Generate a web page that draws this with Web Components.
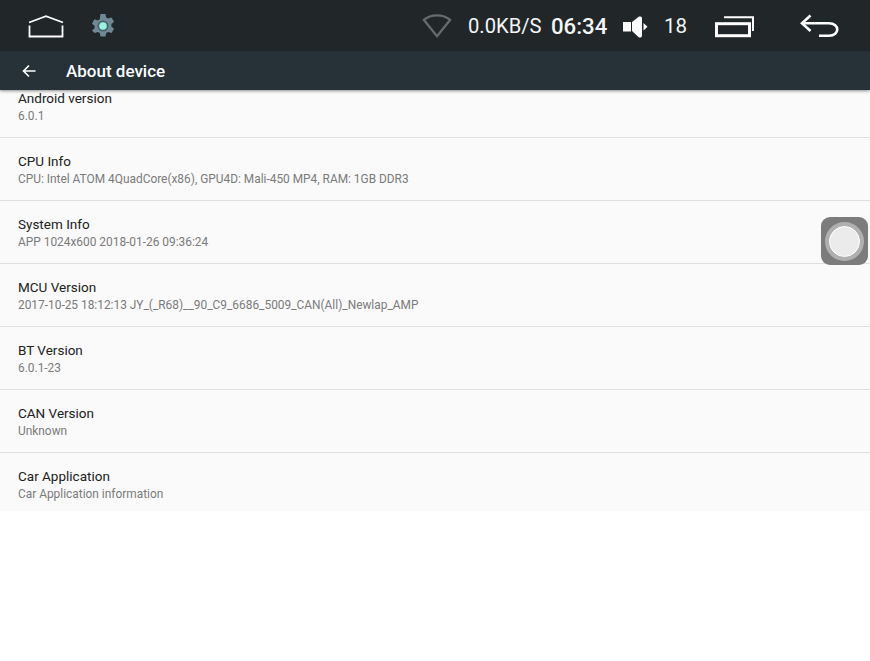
<!DOCTYPE html>
<html>
<head>
<meta charset="utf-8">
<title>About device</title>
<style>
html, body { margin: 0; padding: 0; background: #fff; }
body { width: 870px; height: 661px; overflow: hidden; position: relative; font-family: Roboto, "Liberation Sans", sans-serif; }
</style>
</head>
<body>
<template id="status-bar-tpl">
  <style>
    :host { display: flex; align-items: center; height: 51px; background: #212729; color: #f4f6f6; position: relative; z-index: 3; }
    svg { display: block; flex: none; }
    .home { margin-left: 28px; }
    .gear { margin-left: 27px; }
    .wifi { margin-left: 307px; }
    .speed { margin-left: 16px; font-size: 20.200px; width: 73px; white-space: nowrap; }
    .time { margin-left: 10px; font-size: 22.200px; font-weight: 500; width: 56px; white-space: nowrap; }
    .vol { margin-left: 16px; }
    .level { margin-left: 16px; font-size: 20.500px; width: 22px; }
    .recent { margin-left: 29px; }
    .back { margin-left: 45px; }
  </style>
  <svg class="home" width="36" height="26" viewBox="0 0 36 26" fill="none" stroke="#fff" stroke-width="1.800"><path d="M1 9.500 18 3.200 35 9.500"/><path d="M1.500 12.500V23.500H34.500V12.500"/></svg>
  <svg class="gear" width="24" height="26" viewBox="0 0 24 26"><path fill="#6f8a96" d="M9.500 1h5l.7 3.400 2 1.100 3.300-1.100 2.500 4.300-2.600 2.300v2.400l2.600 2.300-2.500 4.300-3.300-1.100-2 1.100-.7 3.500h-5l-.7-3.500-2-1.100-3.300 1.100L1 17.600l2.600-2.300v-2.400L1 10.600l2.500-4.300 3.300 1.100 2-1.100z"/><circle cx="12" cy="13" r="5.500" fill="#4d6169"/><circle cx="12" cy="13" r="3.800" fill="#9bf3e6"/></svg>
  <svg class="wifi" width="30" height="26" viewBox="0 0 30 26" fill="none" stroke="#666b6c" stroke-width="2.200"><path d="M1.800 6.800C9 .8 21 .8 28.200 6.800L15 23.300Z"/></svg>
  <span class="speed">0.0KB/S</span>
  <span class="time">06:34</span>
  <svg class="vol" width="25" height="24" viewBox="0 0 25 24" fill="#fff"><path d="M0 8h8v9.500H0zM9 8l7-5.500h1.500q1.500 0 1.500 2v17q0 2-1.500 2H16l-7-6.500zM20.500 9l4 3.800-4 3.800z"/></svg>
  <span class="level">18</span>
  <svg class="recent" width="40" height="24" viewBox="0 0 40 24" fill="none" stroke="#fff"><rect x="1.500" y="9.700" width="33" height="12" stroke-width="3"/><path d="M9 3.200H38V17" stroke-width="2"/></svg>
  <svg class="back" width="40" height="24" viewBox="0 0 40 24" fill="none" stroke="#fff" stroke-width="2.600"><path d="M10.500 1.500 2 9.200 10.500 17"/><path d="M2.500 9.200H29C40 9.200 40 21.800 29 21.800H19"/></svg>
</template>

<template id="app-toolbar-tpl">
  <style>
    :host { display: flex; align-items: center; height: 39px; background: #263238; color: #fff; box-shadow: 0 1px 3px rgba(0,0,0,.45); position: relative; z-index: 2; }
    svg { display: block; margin-left: 22px; flex: none; }
    h1 { margin: 0 0 0 30px; font-size: 17px; font-weight: 500; }
  </style>
  <svg width="14" height="14" viewBox="0 0 14 14" fill="none" stroke="#fff" stroke-width="1.600"><path d="M13.500 7H1.500M7 1.500 1.500 7 7 12.500"/></svg>
  <h1><slot></slot></h1>
</template>

<template id="info-row-tpl">
  <style>
    :host { display: block; height: 62px; border-bottom: 1px solid #dfdfdf; padding: 0 18px; box-sizing: content-box; }
    :host([last]) { height: 58px; border-bottom: 0; }
    .title { padding-top: 15px; font-size: 13.500px; line-height: 17px; color: #212121; }
    .sub { font-size: 11.900px; line-height: 18px; color: #7a7a7a; white-space: nowrap; }
  </style>
  <div class="title"><slot name="title"></slot></div>
  <div class="sub"><slot name="sub"></slot></div>
</template>

<template id="info-list-tpl">
  <style>
    :host { display: block; height: 421px; overflow: hidden; background: #fafafa; }
    .inner { margin-top: -15px; }
  </style>
  <div class="inner"><slot></slot></div>
</template>

<template id="assist-touch-tpl">
  <style>
    :host { display: flex; align-items: center; justify-content: center; position: absolute; left: 821px; top: 217px; width: 47px; height: 48px; background: #7c7c7c; border-radius: 9px; z-index: 4; }
    .ring { width: 39px; height: 39px; border-radius: 50%; background: #b0b0b0; display: flex; align-items: center; justify-content: center; }
    .core { width: 29px; height: 29px; border-radius: 50%; background: #ebebeb; border: 1px solid #fff; }
  </style>
  <div class="ring"><div class="core"></div></div>
</template>

<status-bar></status-bar>
<app-toolbar>About device</app-toolbar>
<info-list>
  <info-row><span slot="title">Android version</span><span slot="sub">6.0.1</span></info-row>
  <info-row><span slot="title">CPU Info</span><span slot="sub">CPU: Intel ATOM 4QuadCore(x86), GPU4D: Mali-450 MP4, RAM: 1GB DDR3</span></info-row>
  <info-row><span slot="title">System Info</span><span slot="sub">APP 1024x600 2018-01-26 09:36:24</span></info-row>
  <info-row><span slot="title">MCU Version</span><span slot="sub">2017-10-25 18:12:13 JY_(_R68)__90_C9_6686_5009_CAN(All)_Newlap_AMP</span></info-row>
  <info-row><span slot="title">BT Version</span><span slot="sub">6.0.1-23</span></info-row>
  <info-row><span slot="title">CAN Version</span><span slot="sub">Unknown</span></info-row>
  <info-row last><span slot="title">Car Application</span><span slot="sub">Car Application information</span></info-row>
</info-list>
<assist-touch></assist-touch>

<script>
"use strict";
function define(name) {
    customElements.define(name, class extends HTMLElement {
        constructor() {
            super();
            this.attachShadow({ mode: "open" });
            this.shadowRoot.appendChild(document.getElementById(name + "-tpl").content.cloneNode(true));
        }
    });
}
["status-bar", "app-toolbar", "info-row", "info-list", "assist-touch"].forEach(define);
</script>
</body>
</html>
